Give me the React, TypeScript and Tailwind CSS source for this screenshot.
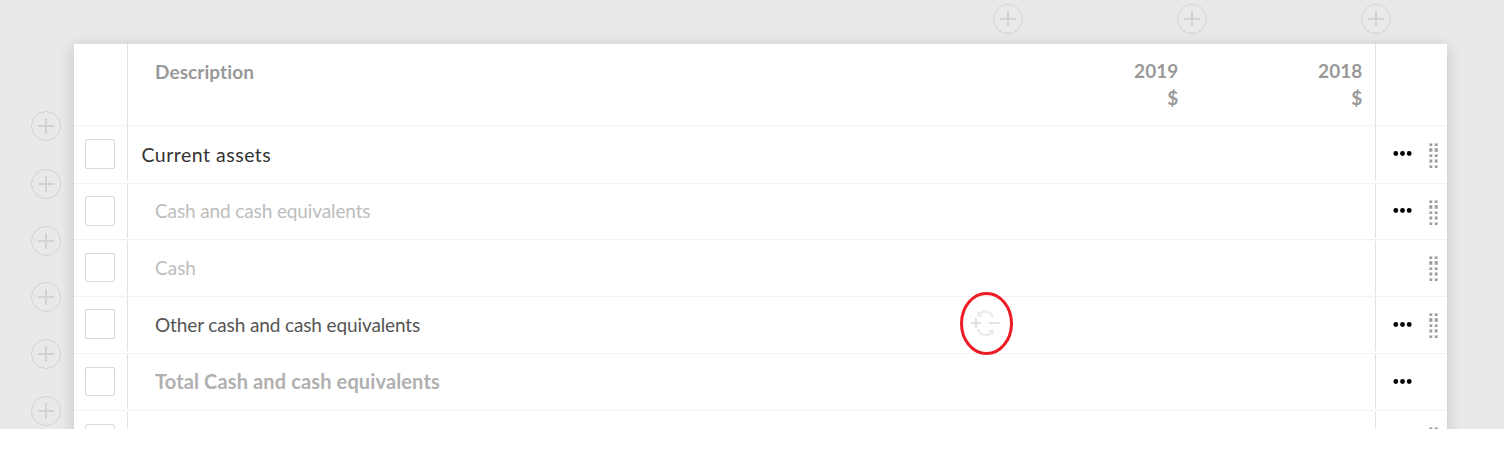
import React from "react";

type Row = {
  label?: string;
  text: string;
  height: string;
  box: string;
  line: string;
  dots?: string;
  grip?: string;
  sync?: boolean;
};

const rows: Row[] = [
  { label: "Current assets", text: "pl-[13.5px] pt-[17px] text-[19.5px] text-[#333333] tracking-[0.5px]", height: "h-[58px]", box: "mt-[13px] h-[30px]", line: "h-[55px]", dots: "pt-[24px]", grip: "pt-[17px]" },
  { label: "Cash and cash equivalents", text: "pl-[27px] pt-[15px] text-[19px] tracking-[-0.12px] text-[#bdbdbd]", height: "h-[56px]", box: "mt-[12px] h-[30px]", line: "h-[54px]", dots: "pt-[23px]", grip: "pt-[16px]" },
  { label: "Cash", text: "pl-[27px] pt-[16px] text-[19px] text-[#bdbdbd]", height: "h-[57px]", box: "mt-[13px] h-[29px]", line: "mt-px h-[54px]", grip: "pt-[16px]" },
  { label: "Other cash and cash equivalents", text: "pl-[27px] pt-[16px] text-[19px] tracking-[-0.12px] text-[#555555]", height: "h-[57px]", box: "mt-[12px] h-[30px]", line: "h-[54px]", dots: "pt-[24px]", grip: "pt-[16px]", sync: true },
  { label: "Total Cash and cash equivalents", text: "pl-[27px] pt-[15px] text-[20px] tracking-[0.13px] font-bold text-[#b0b0b0]", height: "h-[57px]", box: "mt-[13px] h-[29px]", line: "h-[55px]", dots: "pt-[24px]" },
  { text: "", height: "h-[57px]", box: "mt-[13px] h-[30px]", line: "mt-px h-[54px]", grip: "pt-[16px]" },
];

function AddButton() {
  return (
    <button className="block size-[30px] shrink-0" aria-label="Add">
      <svg width="30" height="30" viewBox="0 0 30 30" fill="none" stroke="#d1d2d3">
        <circle cx="15" cy="15" r="14.5" />
        <path d="M7 15h16M15 7v16" strokeWidth="2" />
      </svg>
    </button>
  );
}

function Dots() {
  return (
    <svg width="20" height="7" viewBox="0 0 20 7" fill="#000">
      <circle cx="2.8" cy="3.5" r="2.4" />
      <circle cx="9.5" cy="3.5" r="2.4" />
      <circle cx="16.2" cy="3.5" r="2.4" />
    </svg>
  );
}

const gripRows = [
  { y: 0, h: 3, fill: "#cbcbcb" },
  { y: 5, h: 4, fill: "#b8b8b8" },
  { y: 11, h: 3, fill: "#cbcbcb" },
  { y: 16, h: 4, fill: "#d0d0d0" },
  { y: 22, h: 3, fill: "#cbcbcb" },
];

function Grip() {
  return (
    <svg width="9" height="25" viewBox="0 0 9 25">
      {gripRows.map((r) => (
        <g key={r.y}>
          <rect x="0" y={r.y} width="3.5" height={r.h} fill={r.fill} />
          <rect x="5.5" y={r.y} width="3.5" height={r.h} fill={r.fill} />
          <rect x="1" y={r.y + 1} width="2" height="2" fill="#9b9b9b" />
          <rect x="6" y={r.y + 1} width="2" height="2" fill="#9b9b9b" />
        </g>
      ))}
    </svg>
  );
}

function SyncMark() {
  return (
    <svg className="absolute left-[886px] -top-[5px]" width="54" height="64" viewBox="0 0 54 64" fill="none">
      <path d="M19.3 22.3C23.3 17.8 30.5 18.8 33 25.6M17.8 37C20 43.6 27.3 45 31.5 40.6" stroke="#ececec" strokeWidth="2.4" />
      <path d="M16.8 18.5L17.3 25.2L23.2 24.3zM33.7 44L33.5 37.3L27.3 38.3z" fill="#ececec" />
      <path d="M11 31h10M16 26v10M29 31h10.5" stroke="#e2e2e2" strokeWidth="2" />
      <ellipse cx="26.5" cy="31.5" rx="25" ry="30" stroke="#ed1c24" strokeWidth="3" />
    </svg>
  );
}

function TableRow({ row }: { row: Row }) {
  return (
    <div className={`relative flex shrink-0 border-b border-[#f2f2f3] ${row.height}`}>
      <div className="w-[53px] shrink-0 pl-[11px]">
        <div className={`w-[30px] rounded-[2px] border border-[#d9d9d9] bg-white ${row.box}`} />
      </div>
      <div className={`w-px shrink-0 bg-[#e0e1e2] ${row.line}`} />
      <div className={`flex-1 leading-[24px] whitespace-nowrap ${row.text}`}>{row.label}</div>
      <div className={`w-px shrink-0 bg-[#e0e1e2] ${row.line}`} />
      <div className="flex w-[71px] shrink-0">
        <div className={`w-[53px] pl-[17px] ${row.dots ?? ""}`}>{row.dots && <Dots />}</div>
        <div className={row.grip ?? ""}>{row.grip && <Grip />}</div>
      </div>
      {row.sync && <SyncMark />}
    </div>
  );
}

function YearHead({ year }: { year: string }) {
  return (
    <div className="w-[184px] pt-[13px] pr-[12.8px] text-right leading-[27px]">
      <div>{year}</div>
      <div>$</div>
    </div>
  );
}

export default function App() {
  return (
    <div className="h-[467px] w-[1504px] overflow-hidden bg-white font-['Lato',sans-serif] [font-variant-ligatures:none]">
      <div className="flex h-[429px] overflow-hidden bg-[#e8e9eb]">
        <div className="flex w-[74px] shrink-0 flex-col gap-[27px] pt-[111px] pl-[31px]">
          <AddButton />
          <div className="pt-px"><AddButton /></div>
          <AddButton />
          <div className="-mt-px"><AddButton /></div>
          <AddButton />
          <AddButton />
        </div>
        <div className="flex w-[1373px] shrink-0 flex-col">
          <div className="flex h-[44px] shrink-0 gap-[154px] pt-[4px] pl-[919px]">
            <AddButton />
            <AddButton />
            <AddButton />
          </div>
          <div className="flex shrink-0 flex-col bg-white shadow-[0_3px_15px_rgba(0,0,0,0.16)]">
            <div className="flex h-[82px] shrink-0 border-b border-[#f2f2f3] text-[19px] font-bold text-[#999999]">
              <div className="w-[53px]" />
              <div className="w-px bg-[#e0e1e2]" />
              <div className="flex-1 pt-[16px] pl-[27px] leading-[24px] tracking-[0.08px]">Description</div>
              <YearHead year="2019" />
              <YearHead year="2018" />
              <div className="w-px bg-[#e0e1e2]" />
              <div className="w-[71px]" />
            </div>
            {rows.map((row, i) => (
              <TableRow key={i} row={row} />
            ))}
          </div>
        </div>
      </div>
    </div>
  );
}
